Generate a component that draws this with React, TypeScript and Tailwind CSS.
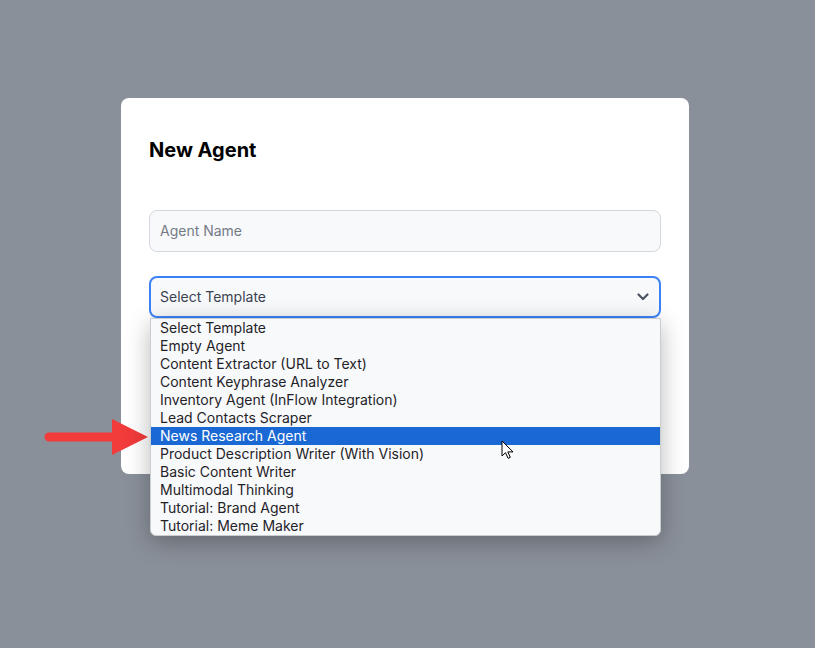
import React from 'react';

const TEMPLATES = [
  'Select Template',
  'Empty Agent',
  'Content Extractor (URL to Text)',
  'Content Keyphrase Analyzer',
  'Inventory Agent (InFlow Integration)',
  'Lead Contacts Scraper',
  'News Research Agent',
  'Product Description Writer (With Vision)',
  'Basic Content Writer',
  'Multimodal Thinking',
  'Tutorial: Brand Agent',
  'Tutorial: Meme Maker',
];

const Chevron = () => (
  <svg width="12" height="8" viewBox="0 0 12 8" fill="none">
    <path d="M1.5 1.5 6 6l4.5-4.5" stroke="#4b5563" strokeWidth="2.2" strokeLinecap="round" strokeLinejoin="round" />
  </svg>
);

const RedArrow = () => (
  <svg width="108" height="40" viewBox="0 0 108 40" fill="none">
    <path d="M6 15.5h63v-13.5l36 18-36 18v-13.5H6a4.5 4.5 0 0 1 0-9z" fill="#f23b3b" />
  </svg>
);

const Pointer = () => (
  <svg width="14" height="20" viewBox="0 0 14 20">
    <path d="M1 1v15l3.5-3.3 2.6 5.6 2.2-1-2.5-5.4H12z" fill="#fff" stroke="#000" strokeWidth="1" strokeLinejoin="round" />
  </svg>
);

export default function App() {
  const selected = 6;

  return (
    <div className="relative min-h-[648px] w-full bg-[#8a9099] pt-[98px] font-['Inter','Liberation_Sans',sans-serif]">
      <div className="ml-[121px] w-[568px] rounded-lg bg-white px-7 pb-[156px] pt-[38px]">
        <h2 className="text-xl font-bold leading-7 text-black">New Agent</h2>

        <div className="mt-[46px] flex h-[42px] items-center rounded-lg border border-[#d4d7dc] bg-[#f8f9fb] px-[10px] text-sm text-[#747b86]">
          Agent Name
        </div>

        <div className="relative mt-6">
          <div className="flex h-[42px] items-center justify-between rounded-lg border-2 border-[#3b82f6] bg-[#f8f9fb] pl-[9px] pr-[10px] text-sm text-[#3c4350]">
            <span>Select Template</span>
            <Chevron />
          </div>

          {/* open native-style list */}
          <div className="absolute left-px top-[42px] z-10 w-[511px] overflow-hidden rounded-b-md border border-[#c9ccd1] bg-[#f8f9fb] shadow-[0_6px_24px_rgba(0,0,0,0.28)]">
            {TEMPLATES.map((t, i) => (
              <div
                key={t}
                className={`h-[18px] pl-[9px] text-sm leading-[18px] ${
                  i === selected ? 'bg-[#1a68d4] text-white' : 'text-[#1f2328]'
                }`}
              >
                {t}
              </div>
            ))}
          </div>
        </div>
      </div>

      <div className="absolute left-[43px] top-[417px]">
        <RedArrow />
      </div>
      <div className="absolute left-[501px] top-[440px] z-20">
        <Pointer />
      </div>
    </div>
  );
}
